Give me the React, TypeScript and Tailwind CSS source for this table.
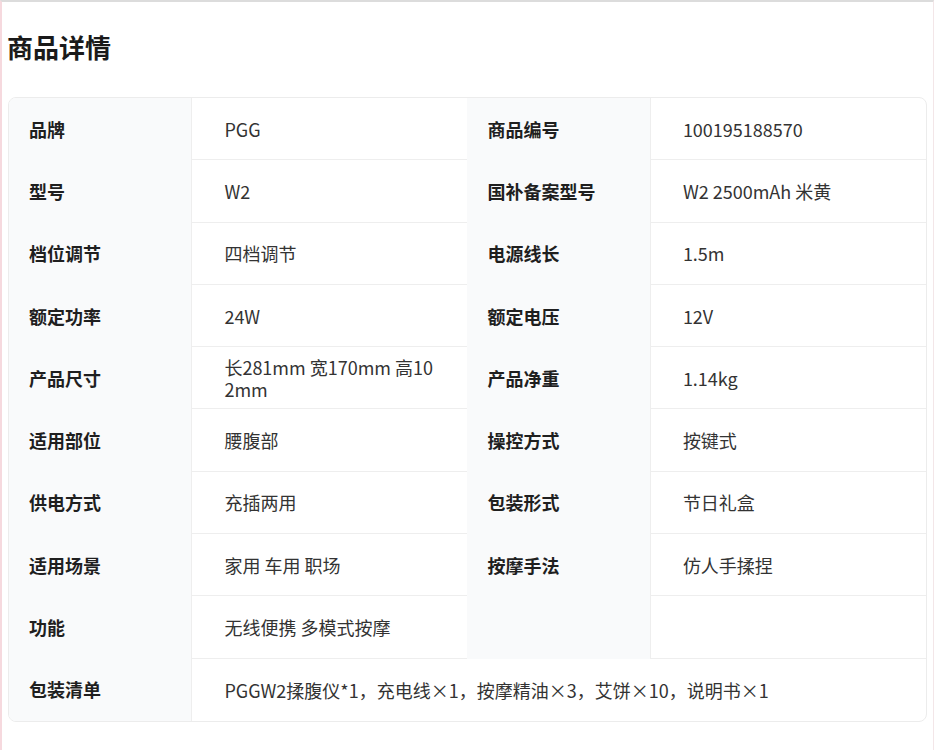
const rows: [string, string, string, string][] = [
  ["品牌", "PGG", "商品编号", "100195188570"],
  ["型号", "W2", "国补备案型号", "W2 2500mAh 米黄"],
  ["档位调节", "四档调节", "电源线长", "1.5m"],
  ["额定功率", "24W", "额定电压", "12V"],
  ["产品尺寸", "长281mm 宽170mm 高102mm", "产品净重", "1.14kg"],
  ["适用部位", "腰腹部", "操控方式", "按键式"],
  ["供电方式", "充插两用", "包装形式", "节日礼盒"],
  ["适用场景", "家用 车用 职场", "按摩手法", "仿人手揉捏"],
  ["功能", "无线便携 多模式按摩", "", ""],
];

function Label({ children }: { children: React.ReactNode }) {
  return (
    <div className="h-[62.3px] flex items-center pl-5 pr-3 bg-[#f9fafb] border-r border-[#eeeeee] text-[18px] font-semibold text-[#1f1f1f]">
      {children}
    </div>
  );
}

function Value({ children, last }: { children: React.ReactNode; last?: boolean }) {
  return (
    <div
      className={
        "h-[62.3px] flex items-center pl-8 pr-8 text-[18px] leading-[22px] text-[#333333] break-all " +
        (last ? "" : "border-b border-[#eeeeee]")
      }
    >
      <span>{children}</span>
    </div>
  );
}

export default function App() {
  return (
    <div className="min-h-[750px] bg-white border-t-2 border-t-[#dcdcdc] border-l-2 border-l-[#f6d9de] border-r border-r-[#f3e6e8] font-['Noto_Sans_CJK_SC',sans-serif]">
      <div className="px-[6px] pt-[27px]">
        <h1 className="text-[26px] leading-9 font-semibold text-[#1a1a1a] mb-8 -ml-px">商品详情</h1>
        <div className="border border-[#ececec] rounded-lg overflow-hidden">
          <div className="grid grid-cols-[20%_30%_20%_30%]">
            {rows.map((r, i) => (
              <div key={i} className="contents">
                <Label>{r[0]}</Label>
                <Value>{r[1]}</Value>
                <Label>{r[2]}</Label>
                <Value>{r[3]}</Value>
              </div>
            ))}
            <Label>包装清单</Label>
            <div className="col-span-3">
              <Value last>PGGW2揉腹仪*1，充电线×1，按摩精油×3，艾饼×10，说明书×1</Value>
            </div>
          </div>
        </div>
      </div>
    </div>
  );
}
